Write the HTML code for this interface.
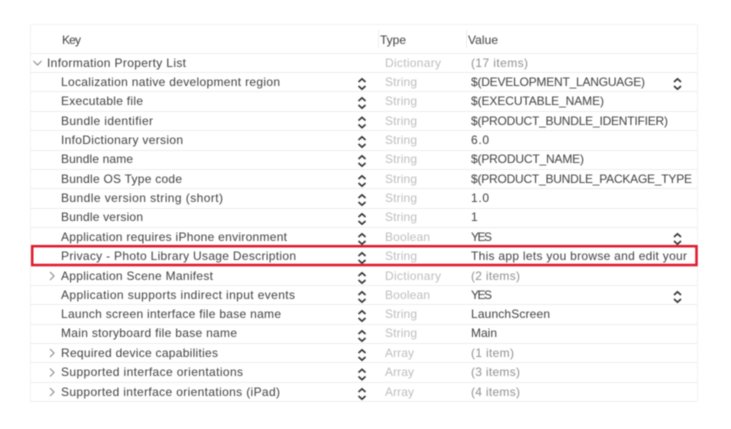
<!DOCTYPE html>
<html><head><meta charset="utf-8"><style>
html,body{margin:0;padding:0;background:#fff;width:731px;height:429px;overflow:hidden}
svg{display:block}
text{font-family:"Liberation Sans",sans-serif;font-size:12px;fill:#404040}
.t{fill:#bdbdbd}
.g{fill:#909090}
.l{stroke:#ececec;stroke-width:1;fill:none}
.o{stroke:#f4f4f4;stroke-width:1;fill:none}
.s{stroke:#2e2e2e;stroke-width:1.6;fill:none}
.c{stroke:#8a8a8a;stroke-width:1.1;fill:none}
</style></head><body>
<svg width="731" height="429" viewBox="0 0 731 429" xmlns="http://www.w3.org/2000/svg">
<defs><g id="st"><path class="s" d="M-3.500 -2 L0 -5.200 L3.500 -2 M-3.500 2 L0 5.200 L3.500 2"/></g>
<path id="cr" class="c" d="M-2 -4 L2 0 L-2 4"/></defs>
<g style="filter:blur(.4px)">
<path class="o" d="M30 24.500H697M30.500 24V401M697.500 24V401"/>
<path class="l" d="M30 53.500H697M30 72.500H697M30 91.500H697M30 111.500H697M30 130.500H697M30 150.500H697M30 169.500H697M30 188.500H697M30 208.500H697M30 227.500H697M30 246.500H697M30 266.500H697M30 285.500H697M30 304.500H697M30 324.500H697M30 343.500H697M30 362.500H697M30 382.500H697M30 401.500H697"/>
<path class="l" d="M378.500 30V48M466.500 30V48"/>
<text x="62" y="44" textLength="19">Key</text>
<text x="380" y="44" textLength="26">Type</text>
<text x="468" y="44" textLength="30">Value</text>
<path class="c" d="M33.500 61 L37.500 65 L41.500 61"/>
<text x="47" y="67" textLength="139">Information Property List</text>
<text x="61" y="86" textLength="219">Localization native development region</text>
<text x="61" y="105" textLength="82">Executable file</text>
<text x="61" y="125" textLength="92">Bundle identifier</text>
<text x="61" y="144" textLength="122">InfoDictionary version</text>
<text x="61" y="163" textLength="72">Bundle name</text>
<text x="61" y="183" textLength="121">Bundle OS Type code</text>
<text x="61" y="202" textLength="162">Bundle version string (short)</text>
<text x="61" y="221" textLength="82">Bundle version</text>
<text x="61" y="241" textLength="226">Application requires iPhone environment</text>
<text x="61" y="260" textLength="235">Privacy - Photo Library Usage Description</text>
<text x="61" y="280" textLength="152">Application Scene Manifest</text>
<text x="61" y="299" textLength="234">Application supports indirect input events</text>
<text x="61" y="318" textLength="220">Launch screen interface file base name</text>
<text x="61" y="337" textLength="176">Main storyboard file base name</text>
<text x="61" y="357" textLength="157">Required device capabilities</text>
<text x="61" y="376" textLength="182">Supported interface orientations</text>
<text x="61" y="396" textLength="219">Supported interface orientations (iPad)</text>
<use href="#cr" x="52" y="276"/><use href="#cr" x="52" y="353"/><use href="#cr" x="52" y="372.500"/><use href="#cr" x="52" y="392"/>
<text class="t" x="385" y="67" textLength="56">Dictionary</text>
<text class="t" x="385" y="86" textLength="32">String</text>
<text class="t" x="385" y="105" textLength="32">String</text>
<text class="t" x="385" y="125" textLength="32">String</text>
<text class="t" x="385" y="144" textLength="32">String</text>
<text class="t" x="385" y="163" textLength="32">String</text>
<text class="t" x="385" y="183" textLength="32">String</text>
<text class="t" x="385" y="202" textLength="32">String</text>
<text class="t" x="385" y="221" textLength="32">String</text>
<text class="t" x="385" y="241" textLength="45">Boolean</text>
<text class="t" x="385" y="260" textLength="32">String</text>
<text class="t" x="385" y="280" textLength="56">Dictionary</text>
<text class="t" x="385" y="299" textLength="45">Boolean</text>
<text class="t" x="385" y="318" textLength="32">String</text>
<text class="t" x="385" y="337" textLength="32">String</text>
<text class="t" x="385" y="357" textLength="29">Array</text>
<text class="t" x="385" y="376" textLength="29">Array</text>
<text class="t" x="385" y="396" textLength="29">Array</text>
<text class="g" x="471" y="67" textLength="57">(17 items)</text>
<text x="471" y="86" textLength="174">$(DEVELOPMENT_LANGUAGE)</text>
<text x="471" y="105" textLength="133">$(EXECUTABLE_NAME)</text>
<text x="471" y="125" textLength="197">$(PRODUCT_BUNDLE_IDENTIFIER)</text>
<text x="471" y="144" textLength="18">6.0</text>
<text x="471" y="163" textLength="113">$(PRODUCT_NAME)</text>
<text x="471" y="183" textLength="221">$(PRODUCT_BUNDLE_PACKAGE_TYPE</text>
<text x="471" y="202" textLength="18">1.0</text>
<text x="471" y="221">1</text>
<text x="471" y="241" textLength="21">YES</text>
<text x="471" y="260" textLength="216">This app lets you browse and edit your</text>
<text class="g" x="471" y="280" textLength="49">(2 items)</text>
<text x="471" y="299" textLength="21">YES</text>
<text x="471" y="318" textLength="79">LaunchScreen</text>
<text x="471" y="337" textLength="26">Main</text>
<text class="g" x="471" y="357" textLength="43">(1 item)</text>
<text class="g" x="471" y="376" textLength="49">(3 items)</text>
<text class="g" x="471" y="396" textLength="49">(4 items)</text>
<use href="#st" x="362" y="84"/><use href="#st" x="362" y="103"/><use href="#st" x="362" y="122.500"/><use href="#st" x="362" y="142"/><use href="#st" x="362" y="161"/><use href="#st" x="362" y="181"/><use href="#st" x="362" y="200"/><use href="#st" x="362" y="219"/><use href="#st" x="362" y="239"/><use href="#st" x="362" y="258"/><use href="#st" x="362" y="278"/><use href="#st" x="362" y="297"/><use href="#st" x="362" y="316"/><use href="#st" x="362" y="336"/><use href="#st" x="362" y="355"/><use href="#st" x="362" y="374.500"/><use href="#st" x="362" y="394"/>
<use href="#st" x="677.500" y="84"/><use href="#st" x="677.500" y="239"/><use href="#st" x="677.500" y="297"/>
<rect x="32.200" y="246.200" width="664.300" height="18.800" fill="none" stroke="#e0192d" stroke-width="2.500"/>
</g>
</svg>
</body></html>
